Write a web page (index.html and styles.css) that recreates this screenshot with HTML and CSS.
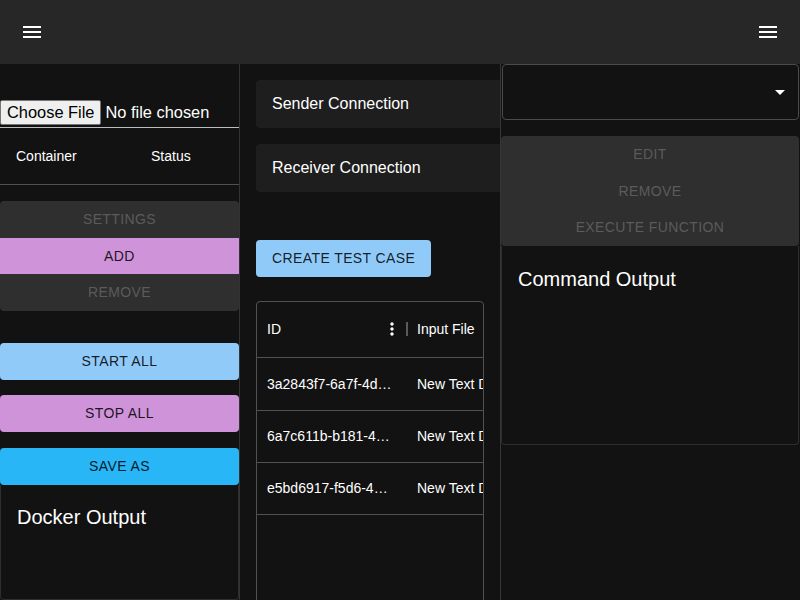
FILE: index.html
```html
<!DOCTYPE html>
<html lang="en">
<head>
<meta charset="utf-8">
<title>Test Runner</title>
<link rel="stylesheet" href="styles.css">
</head>
<body>
<header class="appbar">
  <button class="icon-btn" aria-label="menu">
    <svg viewBox="0 0 24 24" width="24" height="24"><path fill="#fff" d="M3 18h18v-2H3zm0-5h18v-2H3zm0-7v2h18V6z"/></svg>
  </button>
  <button class="icon-btn" aria-label="menu">
    <svg viewBox="0 0 24 24" width="24" height="24"><path fill="#fff" d="M3 18h18v-2H3zm0-5h18v-2H3zm0-7v2h18V6z"/></svg>
  </button>
</header>
<main class="layout">
  <section class="col col-left">
    <div class="file-row"><input class="file-input" type="file"></div>
    <div class="table-head">
      <div class="th th-container">Container</div>
      <div class="th">Status</div>
    </div>
    <div class="btn-group">
      <div class="btn disabled">Settings</div>
      <div class="btn purple">Add</div>
      <div class="btn disabled">Remove</div>
    </div>
    <div class="btn blue start-all">Start all</div>
    <div class="btn purple stop-all">Stop all</div>
    <div class="btn info save-as">Save as</div>
    <div class="output-box docker">
      <div class="output-title">Docker Output</div>
    </div>
  </section>
  <section class="col col-mid">
    <div class="accordion">Sender Connection</div>
    <div class="accordion receiver">Receiver Connection</div>
    <div class="btn blue create">Create test case</div>
    <div class="grid">
      <div class="grid-row grid-header">
        <div class="cell cell-id head-id">
          <span class="head-label">ID</span>
          <svg class="dots" viewBox="0 0 24 24" width="20" height="20"><path fill="#fff" d="M12 8c1.1 0 2-.9 2-2s-.9-2-2-2-2 .9-2 2 .9 2 2 2m0 2c-1.1 0-2 .9-2 2s.9 2 2 2 2-.9 2-2-.9-2-2-2m0 6c-1.1 0-2 .9-2 2s.9 2 2 2 2-.9 2-2-.9-2-2-2"/></svg>
        </div>
        <div class="separator"></div>
        <div class="cell cell-file head-file">Input File</div>
      </div>
      <div class="grid-row first-row">
        <div class="cell cell-id">3a2843f7-6a7f-4d1e-9b3c-2f8e1a7c5d40</div>
        <div class="cell cell-file">New Text Document.txt</div>
      </div>
      <div class="grid-row">
        <div class="cell cell-id">6a7c611b-b181-4c2a-8e5f-0d9b3a6e7f12</div>
        <div class="cell cell-file">New Text Document.txt</div>
      </div>
      <div class="grid-row">
        <div class="cell cell-id">e5bd6917-f5d6-4a8b-b2c3-7e1f9d0a4b65</div>
        <div class="cell cell-file">New Text Document.txt</div>
      </div>
    </div>
  </section>
  <section class="col col-right">
    <div class="select">
      <svg class="select-arrow" viewBox="0 0 24 24" width="24" height="24"><path fill="#fff" d="M7 10l5 5 5-5z"/></svg>
    </div>
    <div class="btn-group right-group">
      <div class="btn disabled">Edit</div>
      <div class="btn disabled">Remove</div>
      <div class="btn disabled">Execute function</div>
    </div>
    <div class="output-box command">
      <div class="output-title">Command Output</div>
    </div>
  </section>
</main>
</body>
</html>
```

FILE: styles.css
```css
* { box-sizing: border-box; }

html, body {
  margin: 0;
  padding: 0;
  background: #121212;
  color: #fff;
  font-family: "Liberation Sans", Arial, sans-serif;
  overflow: hidden;
}

.appbar {
  height: 64px;
  background: #272727;
  display: flex;
  align-items: center;
  justify-content: space-between;
  padding: 0 12px;
}

.icon-btn {
  width: 40px;
  height: 40px;
  padding: 8px;
  border: 0;
  background: transparent;
  display: flex;
}

.layout {
  display: grid;
  grid-template-columns: 240px 261px 299px;
  height: 536px;
}

.col {
  display: flex;
  flex-direction: column;
  min-width: 0;
  overflow: hidden;
}

.col > * { flex-shrink: 0; }

.col-left { border-right: 1px solid #333; }
.col-mid { border-right: 1px solid #363636; padding: 16px 0 0 16px; }
.col-right { padding: 0 1px 0 0; }

/* left column */
.file-row {
  padding-top: 36px;
  height: 64px;
  border-bottom: 1px solid #bdbdbd;
}

.file-input {
  font: 16.4px "Liberation Sans", Arial, sans-serif;
  color: #fff;
  display: block;
}

.file-input::file-selector-button {
  font: inherit;
  color: #000;
  background: #efefef;
  border: 1px solid #767676;
  border-radius: 2px;
  padding: 2px 6px;
  margin: 0 4px 0 0;
}

.table-head {
  display: flex;
  height: 57px;
  border-bottom: 1px solid #515151;
  align-items: center;
  font-size: 14px;
}

.th { padding-left: 16px; }
.th-container { width: 135px; }

.btn {
  display: flex;
  align-items: center;
  justify-content: center;
  height: 36.5px;
  padding: 0 16px;
  font-size: 14px;
  letter-spacing: 0.4px;
  text-transform: uppercase;
  color: rgba(0, 0, 0, 0.87);
  border-radius: 4px;
  white-space: nowrap;
}

.btn.disabled { background: #2f2f2f; color: #5b5b5b; }
.btn.purple { background: #ce93d8; }
.btn.blue { background: #90caf9; }
.btn.info { background: #29b6f6; }

.btn-group { margin-top: 16px; display: flex; flex-direction: column; }
.btn-group .btn { border-radius: 0; }
.btn-group .btn:first-child { border-radius: 4px 4px 0 0; }
.btn-group .btn:last-child { border-radius: 0 0 4px 4px; }

.start-all { margin-top: 32.5px; }
.stop-all { margin-top: 15.5px; }
.save-as { margin-top: 16.5px; }

.output-box {
  border: 1px solid #2e2e2e;
  border-top: 0;
  border-radius: 0 0 4px 4px;
  padding: 16px;
}

.col > .docker { flex: 1 0 auto; }

.output-title {
  font-size: 20px;
  line-height: 32px;
}

/* middle column */
.accordion {
  width: 270px;
  height: 48px;
  background: #1e1e1e;
  border-radius: 4px;
  display: flex;
  align-items: center;
  padding: 0 16px;
  font-size: 16px;
}

.receiver { margin-top: 16px; }

.create {
  margin-top: 48px;
  align-self: flex-start;
}

.grid {
  margin-top: 24px;
  width: 228px;
  height: 420px;
  border: 1px solid #515151;
  border-radius: 4px;
  overflow: hidden;
  font-size: 14px;
}

.grid-row {
  display: flex;
  height: 52px;
  border-bottom: 1px solid #515151;
  align-items: center;
  white-space: nowrap;
}

.grid-header { height: 56px; }
.first-row { height: 53px; padding-top: 1px; }

.cell { overflow: hidden; }

.cell-id {
  width: 150px;
  flex: none;
  padding: 0 14px 0 10px;
  text-overflow: ellipsis;
}

.cell-file {
  flex: none;
  padding-left: 10px;
}

.head-id {
  display: flex;
  align-items: center;
  width: 149px;
  padding-right: 4px;
}

.head-label { flex: 1; }
.dots { flex: none; }

.separator {
  width: 2px;
  height: 14px;
  background: #5a5a5a;
  flex: none;
}

.head-file { padding-left: 9px; }

/* right column */
.select {
  height: 56px;
  margin-left: 1px;
  border: 1px solid #4a4a4a;
  border-radius: 4px;
  display: flex;
  align-items: center;
  justify-content: flex-end;
  padding-right: 6px;
}

.right-group { margin-top: 16px; }

.command {
  height: 199px;
  padding-top: 17px;
}
```
